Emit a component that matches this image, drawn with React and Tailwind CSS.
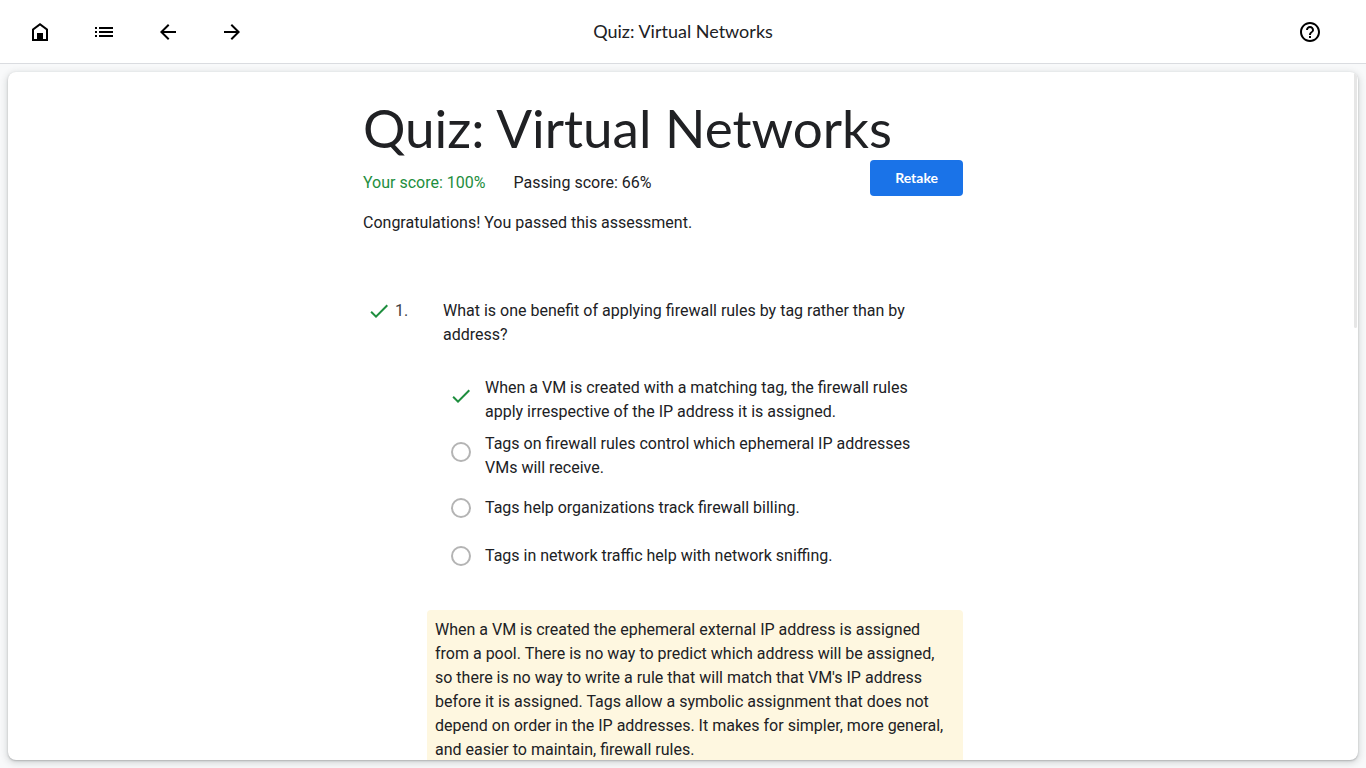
import React from "react";
import { MdArrowBack, MdArrowForward, MdCheck, MdHelpOutline } from "react-icons/md";

const options = [
  { text: "When a VM is created with a matching tag, the firewall rules apply irrespective of the IP address it is assigned.", correct: true },
  { text: "Tags on firewall rules control which ephemeral IP addresses VMs will receive." },
  { text: "Tags help organizations track firewall billing." },
  { text: "Tags in network traffic help with network sniffing." },
];

function HomeIcon() {
  return (
    <svg viewBox="0 0 24 24" className="size-6" fill="currentColor" aria-hidden="true">
      <path fillRule="evenodd" d="M4 21V9l8-6 8 6v12H4Zm2-2h12v-9l-6-4.5L6 10v9Z" />
      <path d="M9 13h6v7H9z" />
    </svg>
  );
}

function ListIcon() {
  return (
    <svg viewBox="0 0 24 24" className="size-6" fill="currentColor" aria-hidden="true">
      <path d="M3 7h2v2H3zm0 4h2v2H3zm0 4h2v2H3zM7 7h14v2H7zm0 4h14v2H7zm0 4h14v2H7z" />
    </svg>
  );
}

function IconButton({ label, children }) {
  return (
    <button type="button" aria-label={label} className="flex size-12 items-center justify-center rounded-full text-black">
      {children}
    </button>
  );
}

function Option({ option }) {
  return (
    <label className="flex min-h-12 gap-3 py-1">
      {option.correct ? (
        <span className="flex h-10 w-5 shrink-0 items-center justify-center">
          <input type="radio" name="q1" defaultChecked className="sr-only" />
          <MdCheck className="size-6 shrink-0 text-[#1e8e3e]" />
        </span>
      ) : (
        <span className="flex h-10 w-5 shrink-0 items-center">
          <input type="radio" name="q1" className="size-5 appearance-none rounded-full border-2 border-[#b4b4b4]" />
        </span>
      )}
      <span className="self-center pl-0.5">{option.text}</span>
    </label>
  );
}

export default function App() {
  return (
    <div className="flex h-screen flex-col bg-[#f8f9fa] font-['Roboto',sans-serif] text-base text-[#202124]">
      <header className="grid h-16 shrink-0 grid-cols-[1fr_auto_1fr] items-center border-b border-[#dadce0] bg-white px-4">
        <nav className="flex gap-4">
          <IconButton label="Home"><HomeIcon /></IconButton>
          <IconButton label="Contents"><ListIcon /></IconButton>
          <IconButton label="Previous"><MdArrowBack className="size-6" /></IconButton>
          <IconButton label="Next"><MdArrowForward className="size-6" /></IconButton>
        </nav>
        <p className="pb-0.5 font-['Lato',sans-serif] text-lg">Quiz: Virtual Networks</p>
        <div className="flex justify-end pr-4">
          <IconButton label="Help"><MdHelpOutline className="size-6" /></IconButton>
        </div>
      </header>

      <main className="flex min-h-0 flex-1 p-2">
        <div className="relative flex-1 overflow-hidden rounded-lg bg-white shadow-[0_1px_2px_rgba(60,64,67,0.3),0_2px_6px_2px_rgba(60,64,67,0.15)]">
          <article className="mx-auto max-w-[640px] pt-6 pr-10">
            <h1 className="font-['Lato',sans-serif] text-[53px] leading-16">Quiz: Virtual Networks</h1>
            <div className="flex justify-between">
              <p className="flex gap-7 pt-[11px]">
                <span className="text-[#1e8e3e]">Your score: 100%</span>
                <span>Passing score: 66%</span>
              </p>
              <button type="button" className="h-9 rounded bg-[#1a73e8] px-[25px] font-['Lato',sans-serif] text-sm font-bold text-white">
                Retake
              </button>
            </div>
            <p className="mt-[15px]">Congratulations! You passed this assessment.</p>

            <section className="mt-16 flex">
              <div className="flex w-20 shrink-0 items-start pl-1">
                <MdCheck className="mr-1 size-6 text-[#1e8e3e]" />
                <span className="text-[#3c4043]">1.</span>
              </div>
              <h2 className="pr-10">What is one benefit of applying firewall rules by tag rather than by address?</h2>
            </section>
            <fieldset className="mt-[25px] pr-10 pl-[88px]">
              {options.map((option) => <Option key={option.text} option={option} />)}
            </fieldset>
            <p className="mt-[30px] ml-16 rounded bg-[#fef7e0] p-2">
              When a VM is created the ephemeral external IP address is assigned from a pool. There is no way to predict which address will be assigned, so there is no way to write a rule that will match that VM's IP address before it is assigned. Tags allow a symbolic assignment that does not depend on order in the IP addresses. It makes for simpler, more general, and easier to maintain, firewall rules.
            </p>
          </article>
          <div className="absolute top-px right-px h-[37%] w-[3px] rounded-full bg-[#e6e6e6]" />
        </div>
      </main>
    </div>
  );
}
